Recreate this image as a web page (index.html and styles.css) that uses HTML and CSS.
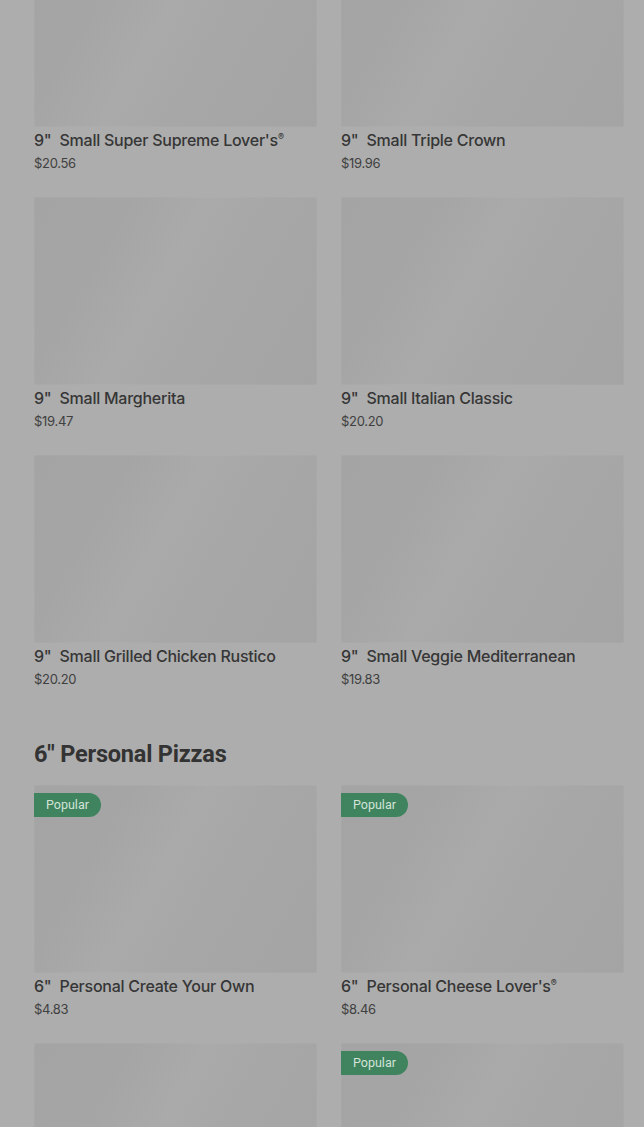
FILE: index.html
```html
<!DOCTYPE html>
<html lang="en">
<head>
<meta charset="utf-8">
<title>Menu</title>
<link rel="stylesheet" href="styles.css">
</head>
<body>
<main class="menu">
  <section class="section section-first">
    <div class="grid">
      <article class="card"><div class="thumb"></div><h3 class="name">9"&nbsp; Small Super Supreme Lover's<sup>®</sup></h3><p class="price">$20.56</p></article>
      <article class="card"><div class="thumb"></div><h3 class="name">9"&nbsp; Small Triple Crown</h3><p class="price">$19.96</p></article>
      <article class="card"><div class="thumb"></div><h3 class="name">9"&nbsp; Small Margherita</h3><p class="price">$19.47</p></article>
      <article class="card"><div class="thumb"></div><h3 class="name">9"&nbsp; Small Italian Classic</h3><p class="price">$20.20</p></article>
      <article class="card"><div class="thumb"></div><h3 class="name">9"&nbsp; Small Grilled Chicken Rustico</h3><p class="price">$20.20</p></article>
      <article class="card"><div class="thumb"></div><h3 class="name">9"&nbsp; Small Veggie Mediterranean</h3><p class="price">$19.83</p></article>
    </div>
  </section>
  <section class="section">
    <h2 class="heading">6" Personal Pizzas</h2>
    <div class="grid">
      <article class="card"><div class="thumb"><span class="badge">Popular</span></div><h3 class="name">6"&nbsp; Personal Create Your Own</h3><p class="price">$4.83</p></article>
      <article class="card"><div class="thumb"><span class="badge">Popular</span></div><h3 class="name">6"&nbsp; Personal Cheese Lover's<sup>®</sup></h3><p class="price">$8.46</p></article>
      <article class="card"><div class="thumb"></div><h3 class="name">&nbsp;</h3><p class="price">&nbsp;</p></article>
      <article class="card"><div class="thumb"><span class="badge">Popular</span></div><h3 class="name">&nbsp;</h3><p class="price">&nbsp;</p></article>
    </div>
  </section>
</main>
</body>
</html>
```
FILE: styles.css
```css
html, body {
  margin: 0;
  padding: 0;
  background: #adadad;
  overflow: hidden;
}
body {
  font-family: Inter, "Noto Sans", Roboto, sans-serif;
  color: #333;
}
.menu {
  padding: 0 20px 0 34px;
}
.section-first {
  margin-top: -61px;
}
.section {
  margin-bottom: 51px;
}
.grid {
  display: grid;
  grid-template-columns: 283px 283px;
  column-gap: 24px;
  row-gap: 25px;
}
.card {
  display: flex;
  flex-direction: column;
}
.thumb {
  position: relative;
  height: 188px;
  border-radius: 2px;
  background: linear-gradient(120deg, #a4a4a4 0%, #a5a5a5 25%, #aaaaaa 45%, #a7a7a7 60%, #a4a4a4 100%);
  box-shadow: inset 0 0 0 1px rgba(255, 255, 255, 0.04);
}
.badge {
  position: absolute;
  left: 0;
  top: 8px;
  height: 24px;
  line-height: 24px;
  padding: 0 12px;
  background: #3f845f;
  color: #d3e3d8;
  font-family: Roboto, "Noto Sans", sans-serif;
  font-size: 12.5px;
  border-radius: 0 12px 12px 0;
}
.name {
  margin: 3px 0 0;
  font-size: 16px;
  line-height: 20px;
  font-weight: 500;
  letter-spacing: -0.25px;
  color: #363636;
  white-space: nowrap;
}
.name sup {
  font-size: 9px;
  line-height: 0;
  vertical-align: 6px;
}
.price {
  margin: 4px 0 0;
  font-size: 13px;
  line-height: 18px;
  color: #404040;
  letter-spacing: -0.3px;
}
.heading {
  margin: 0 0 16px;
  font-family: Roboto, "Noto Sans", sans-serif;
  font-size: 23.5px;
  line-height: 30px;
  font-weight: 700;
  color: #333;
  letter-spacing: -0.2px;
}
```
